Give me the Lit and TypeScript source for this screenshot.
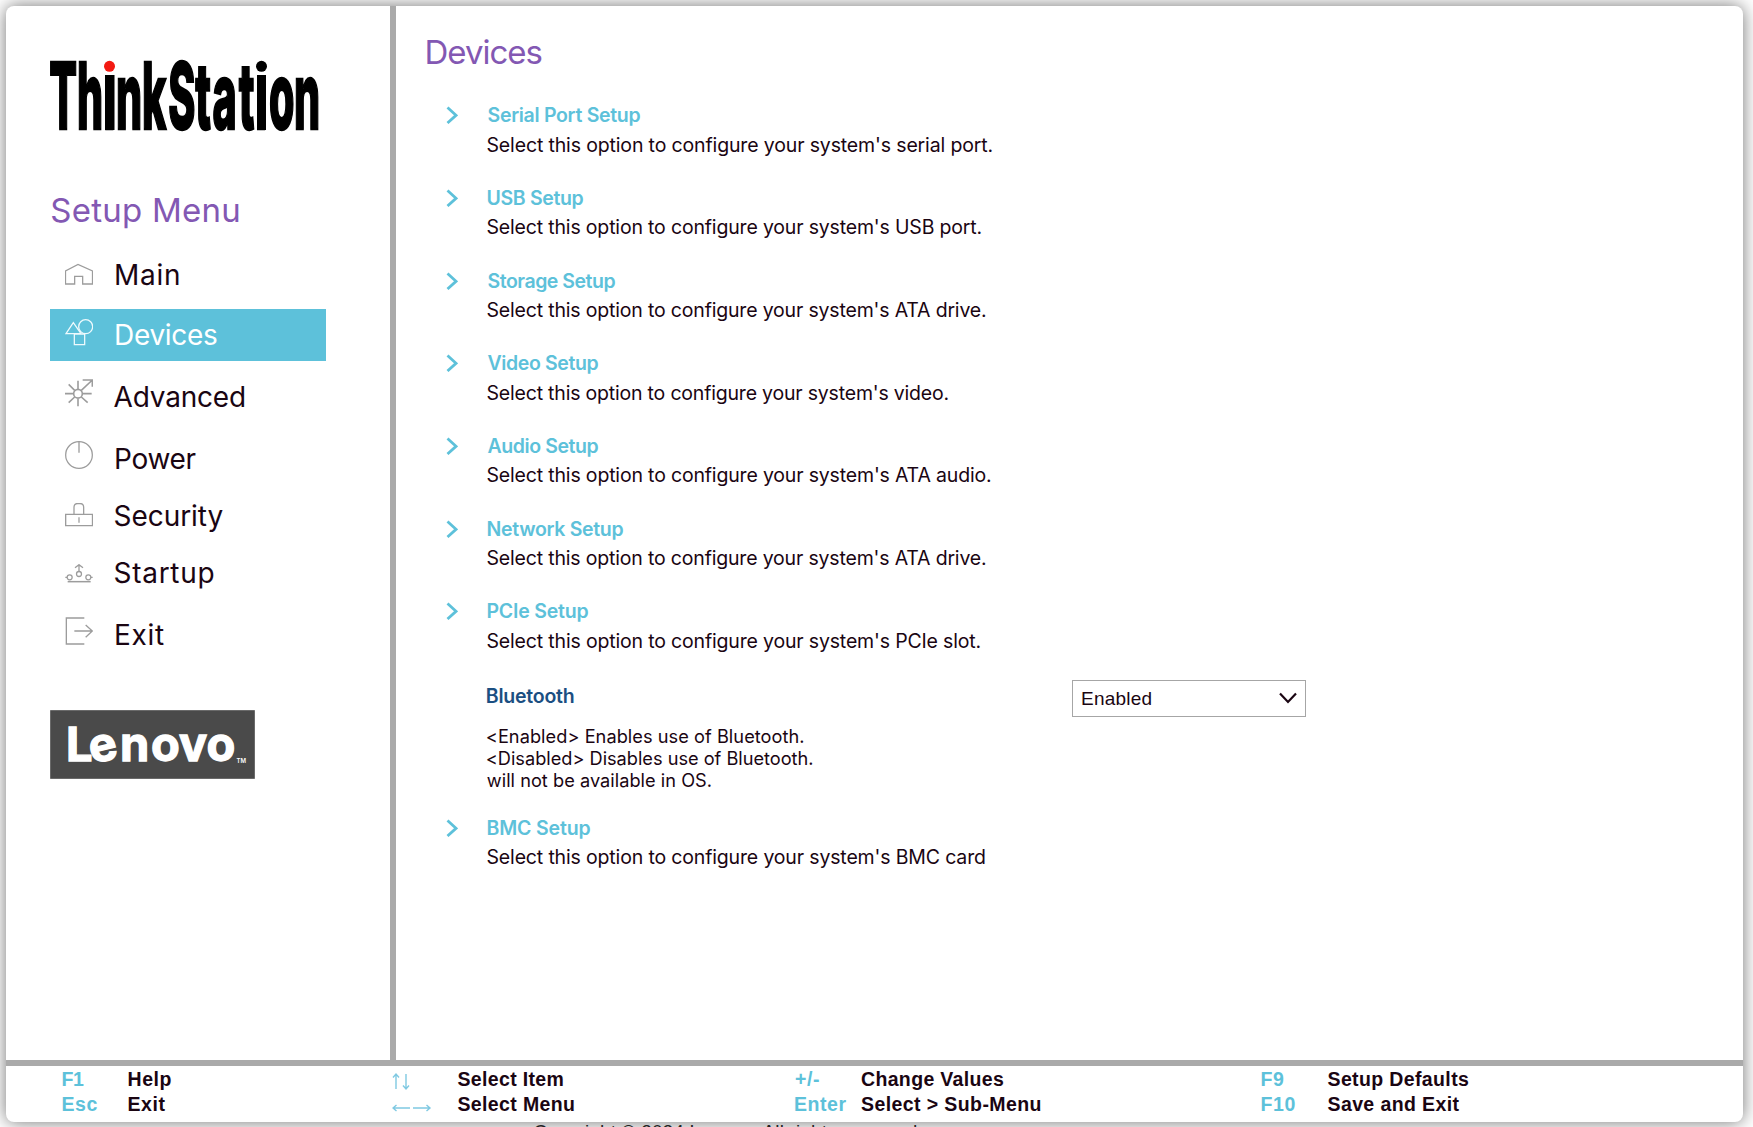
import { LitElement, html, css, svg } from "lit";
import { styleMap } from "lit/directives/style-map.js";

const ctx = document.createElement("canvas").getContext("2d")!;

/** Letter spacing and side bearing that make a label occupy exactly `width` px of ink. */
function fit(text: string, font: string, width: number) {
  ctx.font = font;
  const m = ctx.measureText(text);
  const ink = m.actualBoundingBoxLeft + m.actualBoundingBoxRight;
  const gap = (width - ink) / Math.max(1, text.length - 1);
  return styleMap({
    letterSpacing: `${gap.toFixed(3)}px`,
    marginLeft: `${m.actualBoundingBoxLeft.toFixed(2)}px`,
  });
}

const F_MENU = '400 28px Inter';
const F_HEAD = '400 33px Inter';
const F_TITLE = '600 19.5px Inter';
const F_DESC = '400 19.5px Inter';
const F_HELP = '400 18.2px Inter';
const F_KEY = 'bold 19.5px "Liberation Sans"';
const F_SANS = '400 19px "Liberation Sans"';

interface MenuItem { label: string; width: number; height: number; text: number; icon: number; view: string; art: unknown; active?: boolean }

const menu: MenuItem[] = [
  { label: "Main", width: 63, height: 60, text: 9, icon: 14, view: "75 69 84 84",
    art: svg`<path d="M76.5 132V93L114 73L157.500 93V132H128V109H104V132Z"/>` },
  { label: "Devices", width: 101, height: 52, text: 9, icon: 10, view: "75 237 84 84", active: true,
    art: svg`<path d="M78 281L100 248L123 281ZM103 282H134V314H103Z"/><circle cx="137" cy="260" r="21"/>` },
  { label: "Advanced", width: 130.5, height: 64, text: 19, icon: 18, view: "75 417 84 84",
    art: svg`<g stroke-width="4.800"><circle cx="114" cy="461" r="13"/><path d="M114 422V447M114 475V499M75 461H100M128 461H155M86 433L104 451M104 471L86 488M124 471L143 488M124 451L157 420M128 420H157V440"/></g>` },
  { label: "Power", width: 79.5, height: 62, text: 17, icon: 16, view: "75 3 84 84",
    art: svg`<circle cx="117" cy="45" r="40"/><path d="M117 5V38" stroke-width="4"/>` },
  { label: "Security", width: 108, height: 56, text: 12, icon: 16, view: "75 189 84 84",
    art: svg`<path d="M77 223H157.500V257H77Z" stroke-width="4"/><path d="M102 222V202Q102 190.500 113 190.500H120Q131 190.500 131 202V222M117 232V248"/>` },
  { label: "Startup", width: 99, height: 57, text: 13, icon: 21, view: "75 372 84 84",
    art: svg`<path d="M117 394V374M105 383L117 374L129 383M76 412H81M153 412H158"/><circle cx="117" cy="402" r="7.500"/><circle cx="89" cy="412" r="7.500"/><circle cx="145" cy="412" r="7.500"/><path d="M83 425H152" stroke-width="4.500"/>` },
  { label: "Exit", width: 48, height: 62, text: 18, icon: 17, view: "75 531 84 84",
    art: svg`<path d="M133 534H79V612H133M103 573H157M137 555L157 573L137 592" stroke-width="4"/>` },
];

const D = "Select this option to configure your system's ";
const options = [
  { title: "Serial Port Setup", tw: 153, desc: D + "serial port.", dw: 505 },
  { title: "USB Setup", tw: 96, desc: D + "USB port.", dw: 494 },
  { title: "Storage Setup", tw: 128, desc: D + "ATA drive.", dw: 498.5 },
  { title: "Video Setup", tw: 111, desc: D + "video.", dw: 461 },
  { title: "Audio Setup", tw: 111, desc: D + "ATA audio.", dw: 503.5 },
  { title: "Network Setup", tw: 136, desc: D + "ATA drive.", dw: 498.5 },
  { title: "PCIe Setup", tw: 101, desc: D + "PCIe slot.", dw: 493 },
];
const bmc = { title: "BMC Setup", tw: 103, desc: D + "BMC card", dw: 497.5 };

const up = svg`<svg class="arrow" width="20" height="19" viewBox="0 0 20 19"><path d="M4 17V2M1 5.500L4 2L7 5.500M14 2V17M11 13.500L14 17L17 13.500"/></svg>`;
const side = svg`<svg class="arrow" width="40" height="19" viewBox="0 0 40 19"><path d="M18 11H1M4.500 8L1 11L4.500 14M21 11H38M34.500 8L38 11L34.500 14"/></svg>`;

const keys = [
  [["F1", 21.5, "Help", 43], ["Esc", 35, "Exit", 37]],
  [[up, 0, "Select Item", 106], [side, 0, "Select Menu", 116.5]],
  [["+/-", 24, "Change Values", 143], ["Enter", 51.5, "Select > Sub-Menu", 179.5]],
  [["F9", 22.5, "Setup Defaults", 141.5], ["F10", 34, "Save and Exit", 132]],
] as [unknown, number, string, number][][];

class AppRoot extends LitElement {
  static styles = css`
    :host { display: block; box-sizing: border-box; height: 1127px; padding: 6px 10px 0 6px; overflow: hidden;
      background: #fff; font-family: Inter, "Liberation Sans", sans-serif; color: #1a0512; white-space: nowrap; }
    .window { display: flex; flex-direction: column; height: 1116px; background: #fff; border-radius: 8px;
      box-shadow: 0 0 18px rgba(0, 0, 0, .55); }
    .body { display: flex; height: 1054px; }
    .side { box-sizing: border-box; width: 390px; border-right: 6px solid #aaa; padding: 52px 0 0 44px; flex: none; }
    .brand { display: block; overflow: visible; }
    .brand text { font: 800 91.5px Inter, sans-serif; fill: #000; stroke: #000; stroke-width: 1.8; }
    .brand .glyphs { vector-effect: non-scaling-stroke; }
    .head { font-size: 33px; line-height: 40px; color: #8358b3; font-weight: 400; margin: 0; }
    .side .head { margin-top: 55.6px; padding-left: 1.3px; height: 59.4px; }
    .item { display: flex; width: 276px; box-sizing: border-box; padding-left: 15px; align-items: flex-start; }
    .item svg { fill: none; stroke: #9c9c9c; stroke-width: 3.8; flex: none; }
    .item span { font-size: 28px; line-height: 34px; }
    .item .label { margin-left: 21.5px; line-height: 34px; }
    .item .A { margin-left: 20.5px; }
    .active { background: #5dc1da; color: #fff; }
    .active svg { stroke: #eefafd; }
    .M, .D, .P, .E { padding-left: 1.5px; }
    .lenovo { display: block; margin-top: 48px; }
    .lenovo text { font: 700 47px Inter, sans-serif; fill: #fff; stroke: #fff; stroke-width: 1.3; }
    .lenovo .tm { font: 600 6px Inter, sans-serif; stroke: none; }
    .main { flex: 1; padding: 26px 0 0 30.500px; }
    .option { display: flex; height: 82.67px; padding-left: 19px; }
    .options { padding-top: 31.3px; }
    .chev { fill: none; stroke: #5dc1da; stroke-width: 2.8; margin-top: 3px; flex: none; width: 12px; height: 18px; }
    .copy { margin-left: 30px; }
    .title { font-size: 19.5px; font-weight: 600; line-height: 24px; color: #5dc1da; }
    .desc { font-size: 19.5px; line-height: 24px; margin-top: 5.5px; }
    .setting { display: flex; height: 134px; padding-left: 60.3px; }
    .info { width: 585.200px; padding-top: 2.2px; }
    .info .title { color: #1b4f82; height: 41.4px; }
    .help { font-size: 18.2px; line-height: 22px; }
    .select { box-sizing: border-box; width: 234px; height: 37px; border: 1px solid #a6a6a6; display: flex;
      align-items: center; justify-content: space-between; padding: 1px 8px 0 9px; margin-top: -2.3px;
      font: 19px "Liberation Sans", sans-serif; }
    .select svg { fill: none; stroke: #1a0512; stroke-width: 2.2; margin-top: -1px; }
    .footer { border-top: 6px solid #aaa; display: grid; grid-template-columns: 329px 403.500px 466.500px 1fr;
      padding: 1px 0 0 56.500px; font: bold 19.5px/25px "Liberation Sans", Arial, sans-serif; color: #1a0512; height: 55px; }
    .row { display: grid; grid-template-columns: 66px auto; justify-content: start; height: 25px; }
    .key { color: #5dc1da; height: 25px; }
    .arrow { fill: none; stroke: #7fc9e2; stroke-width: 1.4; display: block; padding-top: 5px; }
    .legal { font: 19px/22px "Liberation Sans", Arial, sans-serif; color: #222; padding-left: 527.500px; position: relative; top: -1px; }
  `;

  option(o: typeof bmc) {
    return html`<div class="option">
      <svg class="chev" viewBox="0 0 12 18"><path d="M1.500 1.500L10 9.300L1.500 17"/></svg>
      <div class="copy">
        <div class="title" style=${fit(o.title, F_TITLE, o.tw)}>${o.title}</div>
        <div class="desc" style=${fit(o.desc, F_DESC, o.dw)}>${o.desc}</div>
      </div></div>`;
  }

  render() {
    const help: [string, number][] = [["<Enabled> Enables use of Bluetooth.", 316.5], ["<Disabled> Disables use of Bluetooth.", 325.5], ["will not be available in OS.", 224]];
    return html`<div class="window">
      <div class="body">
        <nav class="side">
          <svg class="brand" width="270" height="76" viewBox="0 0 270 76">
            <text class="glyphs" transform="scale(.45 1)" y="71" x="-1.500 60 119 146.500 204.500 263 323 361 419.500 456 486.500 542">ThinkStation</text>
            <path d="M53 -8H67V17H53ZM204.500 -8H219V17H204.500Z" fill="#fff"/>
            <path d="M55 17H64.500V72H55ZM207 17H216V72H207Z"/>
            <circle cx="59.500" cy="8.300" r="5.500" fill="#f31a12"/><circle cx="211.500" cy="8.300" r="5.500"/>
          </svg>
          <h1 class="head"><span style=${fit("Setup Menu", F_HEAD, 187)}>Setup Menu</span></h1>
          ${menu.map(i => html`<div class="item ${i.active ? "active" : ""}" style=${styleMap({ height: i.height + "px" })}>
            <svg width="28" height="28" viewBox=${i.view} style=${styleMap({ marginTop: i.icon + "px" })}>${i.art}</svg>
            <div class="label ${i.label[0]}" style=${styleMap({ marginTop: i.text + "px" })}><span style=${fit(i.label, F_MENU, i.width)}>${i.label}</span></div>
          </div>`)}
          <svg class="lenovo" width="205" height="69" viewBox="0 0 205 69">
            <path d="M.500 .500H204.500V68.500H.500Z" fill="#4a4a4a" stroke="#6a6a6a"/>
            <text x="16 42.500 70 101 129 156.500" y="50.500 54 50.500 50.500 50.500 50.500" rotate="0 -14 0 0 0 0">Lenovo</text>
            <text class="tm" x="186.500" y="53">TM</text>
          </svg>
        </nav>
        <main class="main">
          <h2 class="head"><span style=${fit("Devices", F_HEAD, 115)}>Devices</span></h2>
          <div class="options">
            ${options.map(o => this.option(o))}
            <div class="setting">
              <div class="info">
                <div class="title" style=${fit("Bluetooth", F_TITLE, 87)}>Bluetooth</div>
                ${help.map(([t, w]) => html`<div class="help" style=${fit(t, F_HELP, w)}>${t}</div>`)}
              </div>
              <div class="select"><span style=${fit("Enabled", F_SANS, 69.5)}>Enabled</span>
                <svg width="18" height="12" viewBox="0 0 18 12"><path d="M1 1.500L9 10L17 1.500"/></svg></div>
            </div>
            ${this.option(bmc)}
          </div>
        </main>
      </div>
      <footer class="footer">
        ${keys.map(col => html`<div>${col.map(([k, kw, t, tw]) => html`<div class="row">
          <div class="key">${typeof k === "string" ? html`<span style=${fit(k, F_KEY, kw)}>${k}</span>` : k}</div>
          <div><span style=${fit(t, F_KEY, tw)}>${t}</span></div></div>`)}</div>`)}
      </footer>
    </div>
    <div class="legal"><span style=${fit("Copyright © 2024 Lenovo. All rights reserved.", F_SANS, 389)}>Copyright © 2024 Lenovo. All rights reserved.</span></div>`;
  }
}
customElements.define("app-root", AppRoot);
